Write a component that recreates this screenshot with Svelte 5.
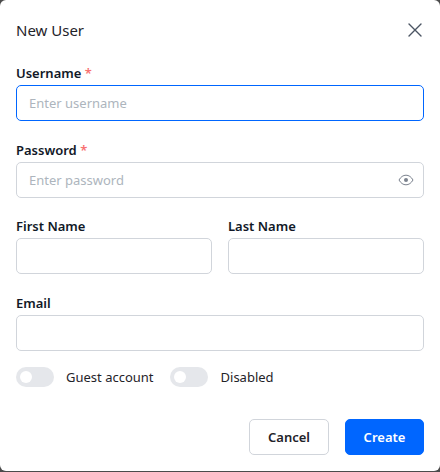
<script>
  let username = $state("");
  let password = $state("");
  let firstName = $state("");
  let lastName = $state("");
  let email = $state("");
  let guest = $state(false);
  let disabled = $state(false);
  let showPassword = $state(false);
</script>

<div class="dialog">
  <header class="head">
    <h2>New User</h2>
    <button class="close" aria-label="Close">
      <svg width="14" height="14" viewBox="0 0 14 14" fill="none" stroke="#4b5563" stroke-width="1.4" stroke-linecap="round">
        <path d="M1 1l12 12M13 1L1 13" />
      </svg>
    </button>
  </header>

  <form class="form" onsubmit={(e) => e.preventDefault()}>
    <div class="field">
      <label for="username">Username <span class="req">*</span></label>
      <input id="username" class="focused" placeholder="Enter username" bind:value={username} />
    </div>

    <div class="field">
      <label for="password">Password <span class="req">*</span></label>
      <div class="pw">
        <input id="password" type={showPassword ? "text" : "password"} placeholder="Enter password" bind:value={password} />
        <button type="button" class="eye" aria-label="Show password" onclick={() => (showPassword = !showPassword)}>
          <svg width="16" height="12" viewBox="0 0 16 12" fill="none" stroke="#7b828e" stroke-width="1">
            <path d="M1 6c1.800-3.200 4.200-4.800 7-4.800S13.200 2.800 15 6c-1.800 3.200-4.200 4.800-7 4.800S2.800 9.200 1 6z" />
            <circle cx="8" cy="6" r="2" fill="#7b828e" stroke="none" />
          </svg>
        </button>
      </div>
    </div>

    <div class="row">
      <div class="field">
        <label for="first">First Name</label>
        <input id="first" bind:value={firstName} />
      </div>
      <div class="field">
        <label for="last">Last Name</label>
        <input id="last" bind:value={lastName} />
      </div>
    </div>

    <div class="field">
      <label for="email">Email</label>
      <input id="email" bind:value={email} />
    </div>

    <div class="toggles">
      <button type="button" class="switch" class:on={guest} aria-label="Guest account" onclick={() => (guest = !guest)}><span></span></button>
      <span class="toggle-label first">Guest account</span>
      <button type="button" class="switch" class:on={disabled} aria-label="Disabled" onclick={() => (disabled = !disabled)}><span></span></button>
      <span class="toggle-label second">Disabled</span>
    </div>

    <footer class="actions">
      <button type="button" class="btn">Cancel</button>
      <button type="submit" class="btn primary">Create</button>
    </footer>
  </form>
</div>

<style>
  :global(body) {
    margin: 0;
    background: #4b4b4b;
  }
  .dialog {
    box-sizing: border-box;
    width: 440px;
    height: 471px;
    padding: 0 16px;
    background: #fff;
    border-radius: 6px;
    font-family: "Noto Sans", "Open Sans", sans-serif;
    font-size: 13px;
    color: #1f2329;
  }
  .head {
    display: flex;
    align-items: center;
    justify-content: space-between;
    height: 60px;
    margin-bottom: 4px;
  }
  h2 {
    margin: 0;
    font-size: 15px;
    font-weight: 400;
  }
  .close {
    display: flex;
    margin-right: 2px;
    padding: 0;
    border: none;
    background: none;
  }
  .form {
    display: flex;
    flex-direction: column;
  }
  .field {
    display: flex;
    flex-direction: column;
    flex: 1;
    margin-bottom: 19.67px;
  }
  label {
    height: 18px;
    margin-bottom: 3px;
    line-height: 18px;
    font-weight: 600;
    color: #111827;
  }
  .req {
    color: #f87171;
  }
  input {
    box-sizing: border-box;
    width: 100%;
    height: 36px;
    padding: 0 12px;
    border: 1px solid #d1d5db;
    border-radius: 5px;
    outline: none;
    font: inherit;
    color: inherit;
  }
  input::placeholder {
    color: #adb5bd;
  }
  input.focused {
    border-color: #0066ff;
  }
  .pw {
    position: relative;
  }
  .eye {
    position: absolute;
    top: 12px;
    right: 10px;
    display: flex;
    padding: 0;
    border: none;
    background: none;
  }
  .row {
    display: flex;
    gap: 16px;
  }
  .toggles {
    display: flex;
    align-items: center;
    height: 20px;
    margin-top: -3.67px;
  }
  .switch {
    display: flex;
    align-items: center;
    width: 38px;
    height: 20px;
    padding: 0 4px;
    border: none;
    border-radius: 10px;
    background: #e5e7eb;
  }
  .switch span {
    width: 12px;
    height: 12px;
    border-radius: 50%;
    background: #fff;
  }
  .switch.on {
    justify-content: flex-end;
    background: #0066ff;
  }
  .toggle-label {
    margin-left: 12px;
    color: #1f2329;
  }
  .toggle-label.first {
    margin-right: 16px;
  }
  .toggle-label.second {
    margin-left: 13px;
  }
  .actions {
    display: flex;
    justify-content: flex-end;
    gap: 16px;
    margin-top: 32px;
  }
  .btn {
    width: 80px;
    height: 36px;
    border: 1px solid #d1d5db;
    border-radius: 5px;
    background: #fff;
    font: inherit;
    font-weight: 600;
    color: #1f2329;
  }
  .btn.primary {
    width: 79px;
    border-color: #0066ff;
    background: #0066ff;
    color: #fff;
  }
</style>
